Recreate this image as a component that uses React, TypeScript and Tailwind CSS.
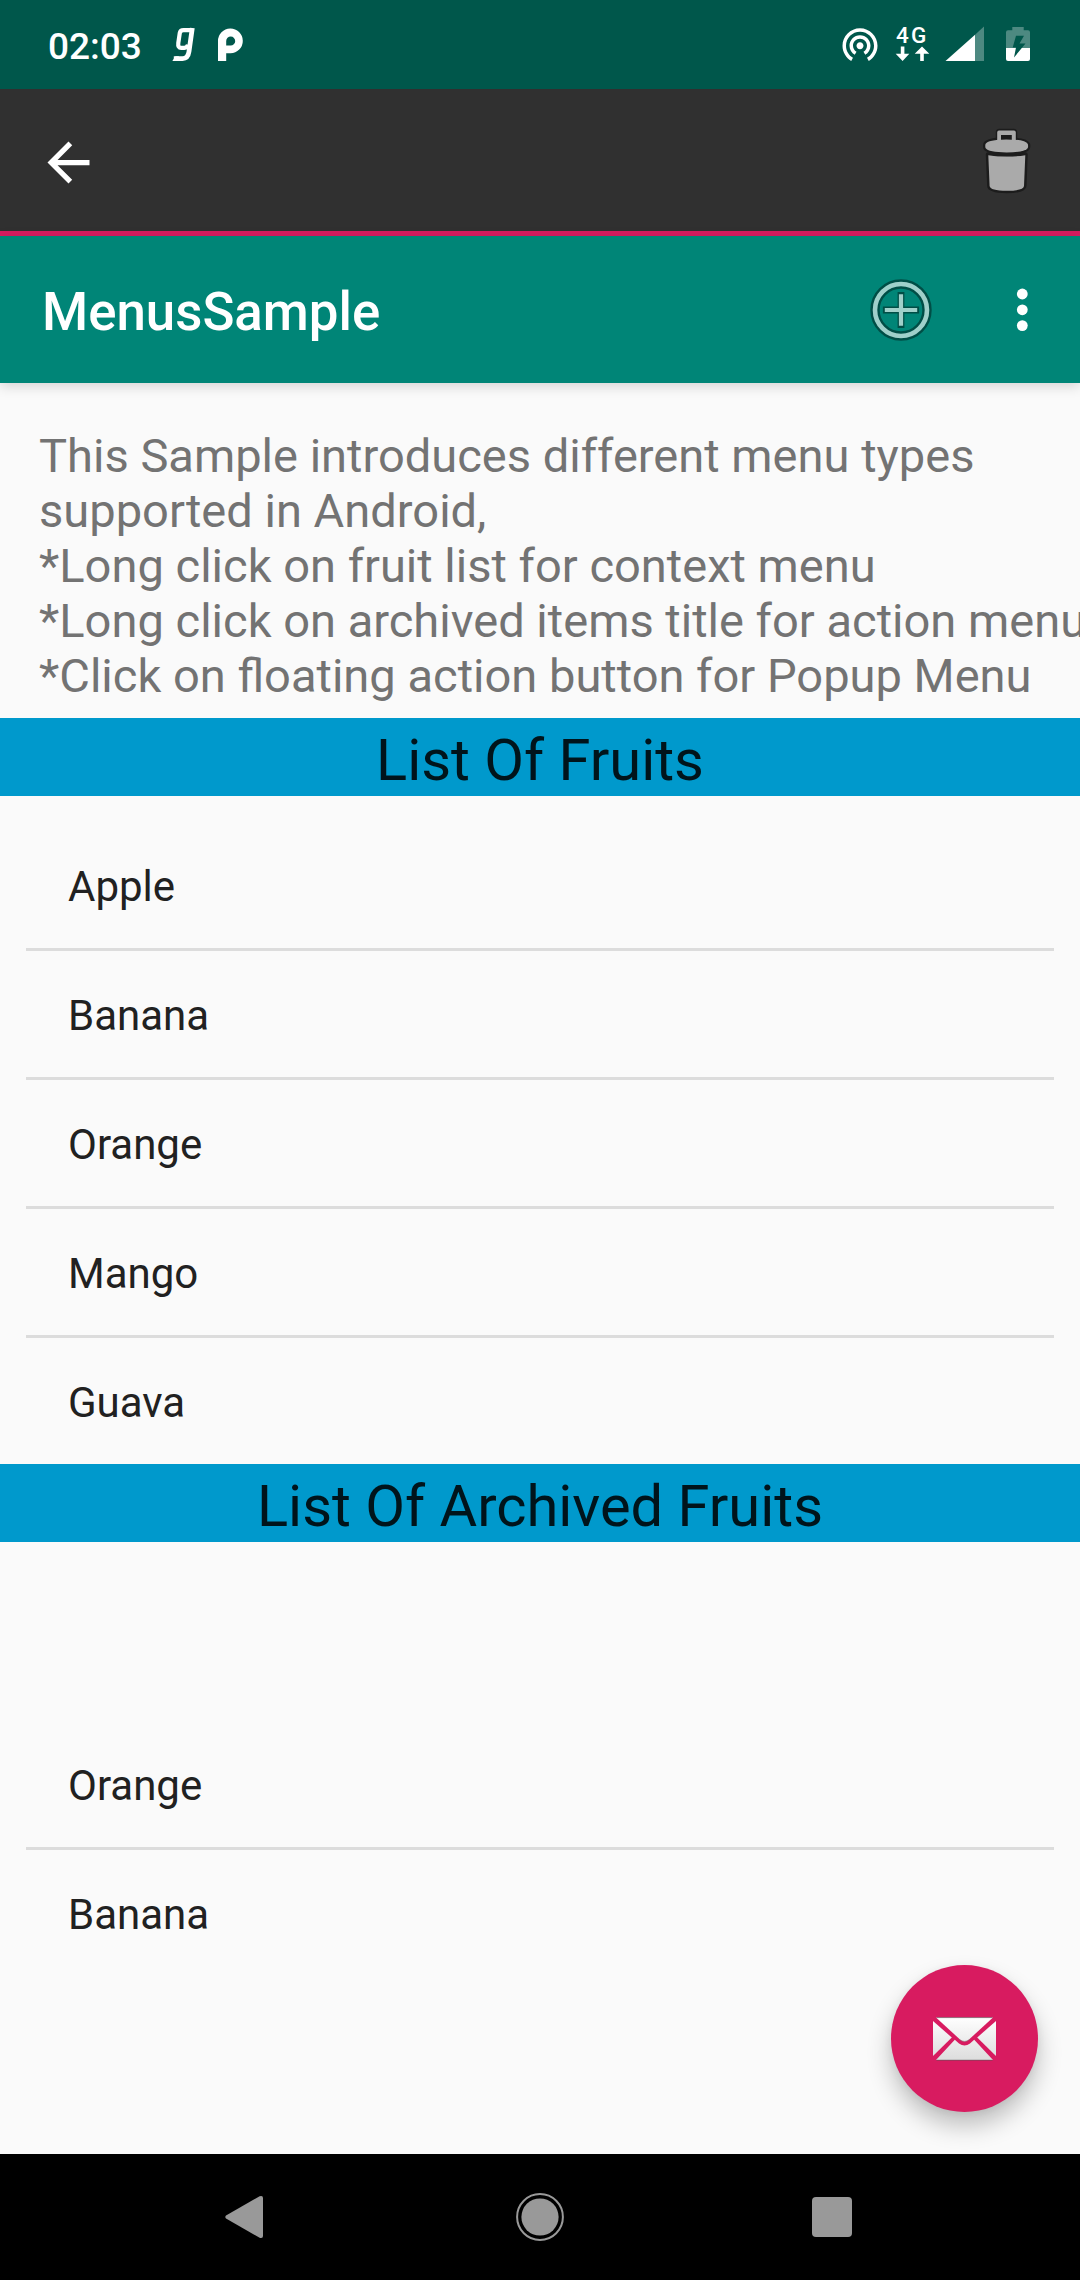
import type { ReactNode } from 'react';

const fruits = ['Apple', 'Banana', 'Orange', 'Mango', 'Guava'];
const archived = ['Orange', 'Banana'];

function StatusBar() {
  return (
    <div className="flex h-[89px] shrink-0 items-start bg-[#00574b] text-white">
      <span className="ml-[48px] mt-[25px] w-[124px] text-[37px] font-medium leading-[43px]">02:03</span>
      <svg className="mt-[27px] h-[35px] w-[24px]" viewBox="0 0 24 35" fill="none" stroke="white">
        <path d="M20.2 3.2H11.6Q8.4 3.2 7.8 6L6.3 16Q5.7 20.8 9.2 20.8H12.4Q15.4 20.8 16 17.6" strokeWidth="4.2" />
        <path d="M20.3 1L17 24.5Q16 31.6 10.5 31.6H1.8" strokeWidth="4.8" />
        <path d="M0.3 34H5L7 29.2H3.5Z" fill="white" stroke="none" />
      </svg>
      <svg className="ml-[21px] mt-[28px] h-[34px] w-[27px]" viewBox="0 0 27 34">
        <path
          fill="white"
          fillRule="evenodd"
          d="M1 33V13A12.4 12.4 0 1 1 13.5 25.2H9.2V33ZM9.2 17.5H13.5A4.5 4.5 0 1 0 9.2 13Z"
        />
      </svg>
      <svg className="ml-[594.5px] mt-[22.7px] size-[42px]" viewBox="0 0 24 24" fill="white">
        <path d="M12 11c-1.1 0-2 .9-2 2s.9 2 2 2 2-.9 2-2-.9-2-2-2zm6 2c0-3.31-2.69-6-6-6s-6 2.69-6 6c0 2.22 1.21 4.15 3 5.19l1-1.74c-1.19-.7-2-1.97-2-3.45 0-2.21 1.79-4 4-4s4 1.79 4 4c0 1.48-.81 2.75-2 3.45l1 1.74c1.79-1.04 3-2.97 3-5.19zM12 3C6.48 3 2 7.48 2 13c0 3.7 2.01 6.92 4.99 8.65l1-1.73C5.61 18.53 4 15.96 4 13c0-4.42 3.58-8 8-8s8 3.58 8 8c0 2.96-1.61 5.53-4 6.92l1 1.73c2.99-1.73 5-4.95 5-8.65 0-5.52-4.48-10-10-10z" />
      </svg>
      <div className="ml-[14.5px] mt-[24px] flex w-[36px] flex-col">
        <span className="pl-[1px] text-[22.5px] font-medium leading-[22px] tracking-[2.2px]">4G</span>
        <svg className="h-[16px] w-[36px]" viewBox="0 0 36 16" fill="white">
          <path d="M5.8 .5h3.6V7.7H14.3L7.6 15 .7 7.7H5.8Z" />
          <path d="M25.2 15V7.7H19.7L27 .5 34.3 7.7H28.8V15Z" />
        </svg>
      </div>
      <svg className="ml-[14px] mt-[26px] h-[35px] w-[39px]" viewBox="0 0 39 35" fill="white">
        <path d="M.5 35L30 8.8V35Z" />
        <path d="M30 8.8L39 .5V35H30Z" opacity=".3" />
      </svg>
      <svg className="ml-[22px] mt-[27px] h-[34px] w-[24px]" viewBox="0 0 24 34">
        <path d="M6.3 0H17.7V3.3H22Q24 3.3 24 5.3V21H0V5.3Q0 3.3 2 3.3H6.3Z" fill="white" opacity=".3" />
        <path d="M0 21H24V32Q24 34 22 34H2Q0 34 0 32Z" fill="white" />
        <path d="M10 8.7H18L13.5 16.5H19.5L8 30.5 10 20.5H6.7Z" fill="#00574b" />
      </svg>
    </div>
  );
}

function ActionModeBar() {
  return (
    <div className="flex h-[147px] shrink-0 justify-between border-b-[5px] border-[#d81b60] bg-[#303030]">
      <svg className="ml-[37.3px] mt-[42px] size-[63px]" viewBox="0 0 24 24" fill="white">
        <path d="M20 11H7.83l5.59-5.59L12 4l-8 8 8 8 1.41-1.41L7.83 13H20z" />
      </svg>
      <svg className="mr-[48px] mt-[37px] h-[70px] w-[50px]" viewBox="0 0 50 70" fill="#aaaaaa">
        <g stroke="#1c1c1c" strokeWidth="4.5" strokeLinejoin="round">
          <path d="M16 16V6.5Q16 5 17.5 5H31.5Q33 5 33 6.5V16Z" />
          <path d="M6 28.5H43.5L42.3 60Q42 65 24.8 65T7.4 60Z" />
          <path d="M3.5 18Q6 13.5 24.7 13.5T45.8 18Q46.4 20 45.8 22Q43 26.4 24.7 26.4T3.5 22Q3 20 3.5 18Z" />
        </g>
        <path d="M6.3 29.2Q24.8 32.2 43.3 29.2L42 60Q41.5 64.8 24.8 64.8T7.6 60Z" />
        <path d="M3.5 18Q6 13.5 24.7 13.5T45.8 18Q46.4 20 45.8 22Q43 26.4 24.7 26.4T3.5 22Q3 20 3.5 18Z" />
        <path d="M15.2 16V6.5Q15.2 4.6 17 4.6H32Q33.8 4.6 33.8 6.5V16Z" />
        <path d="M19 9H29.8V13.8Q24 13.3 19 13.8Z" fill="#1c1c1c" />
      </svg>
    </div>
  );
}

function Toolbar() {
  return (
    <div className="z-10 flex h-[147px] shrink-0 items-center bg-[#008577] shadow-[0_3px_12px_rgba(0,0,0,0.16)]">
      <h1 className="ml-[42px] mt-[4px] flex-1 text-[52.8px] font-medium leading-[62px] text-white">MenusSample</h1>
      <svg className="size-[64px]" viewBox="-32 -32 64 64" fill="none">
        <g stroke="#00453e" opacity=".85">
          <circle r="26" strokeWidth="9.4" />
          <path d="M0-16V16M-16 0H16" strokeWidth="7.4" strokeLinecap="square" transform="scale(.92)" />
        </g>
        <g stroke="#9fd0ca">
          <circle r="26" strokeWidth="4.6" />
          <path d="M0-15.8V15.8M-16.2 0H16.2" strokeWidth="4.2" />
        </g>
      </svg>
      <svg className="ml-[83px] mr-[52px] h-[44px] w-[12px]" viewBox="0 0 12 44" fill="white">
        <circle cx="6.3" cy="6" r="5.4" />
        <circle cx="6.3" cy="21.8" r="5.4" />
        <circle cx="6.3" cy="37.6" r="5.4" />
      </svg>
    </div>
  );
}

function SectionTitle({ children }: { children: ReactNode }) {
  return (
    <h2 className="h-[78px] shrink-0 bg-[#0099cc] pt-[8px] text-center text-[57.8px] leading-[68px] text-black/87">
      {children}
    </h2>
  );
}

function List({ items }: { items: string[] }) {
  return (
    <ul className="mx-[26px] divide-y-[3px] divide-[#dcdcdc]">
      {items.map((item) => (
        <li key={item} className="box-content flex h-[126px] items-center pl-[42px] text-[42px] leading-[50px] text-[#212121]">
          <span className="pt-[4px]">{item}</span>
        </li>
      ))}
    </ul>
  );
}

function NavigationBar() {
  return (
    <div className="flex h-[126px] shrink-0 items-center bg-black">
      <svg className="ml-[225px] h-[44px] w-[40px]" viewBox="0 0 40 44" fill="#999999">
        <path d="M1 20.4L34.6 1.3Q38 .2 38 3V41Q38 43.8 34.6 42.7L1 23.6Q-.4 22 1 20.4Z" />
      </svg>
      <svg className="ml-[251px] size-[48px]" viewBox="-24 -24 48 48" fill="none">
        <circle r="22.9" stroke="#999999" strokeWidth="2" />
        <circle r="18.6" fill="#999999" />
      </svg>
      <div className="ml-[248px] size-[40px] rounded-[4px] bg-[#999999]" />
    </div>
  );
}

function MailButton() {
  return (
    <button
      aria-label="Mail"
      className="absolute right-[42px] bottom-[42px] flex size-[147px] items-center justify-center rounded-full bg-[#d81b60] shadow-[0_14px_24px_rgba(0,0,0,0.24),0_2px_8px_rgba(0,0,0,0.06)]"
    >
      <svg className="h-[44px] w-[63px]" viewBox="0 0 63 44">
        <defs>
          <linearGradient id="paper" x1="0" y1="0" x2="0" y2="44" gradientUnits="userSpaceOnUse">
            <stop offset="0" stopColor="#ffffff" />
            <stop offset="1" stopColor="#dcdcdc" />
          </linearGradient>
        </defs>
        <g fill="url(#paper)">
          <path d="M3 .6H60L36 22.5Q31.5 26.5 27 22.5Z" />
          <path d="M0 4L18.8 20.5 0 39Z" />
          <path d="M63 4L44.2 20.5 63 39Z" />
          <path d="M3 43L21.8 22.8 26 26.4Q31.5 30.4 37 26.4L41.2 22.8 60 43Z" />
        </g>
        <path d="M3.5 .6H59.5M3.5 43.2H59.5" stroke="#555555" strokeWidth="1" opacity=".6" />
        <path d="M26 22.2Q31.5 26.6 37 22.2" fill="none" stroke="#777777" strokeWidth=".9" opacity=".6" />
      </svg>
    </button>
  );
}

export default function App() {
  return (
    <div className="flex h-[2280px] w-[1080px] flex-col overflow-hidden bg-[#fafafa] font-['Roboto',sans-serif]">
      <StatusBar />
      <ActionModeBar />
      <Toolbar />
      <main className="relative flex min-h-0 flex-1 flex-col overflow-hidden">
        <p className="h-[335px] shrink-0 whitespace-pre pt-[45px] pl-[39px] text-[47.05px] leading-[55px] text-[#737373]">
          {[
            'This Sample introduces different menu types',
            'supported in Android,',
            '*Long click on fruit list for context menu',
            '*Long click on archived items title for action menu',
            '*Click on floating action button for Popup Menu',
          ].join('\n')}
        </p>
        <SectionTitle>List Of Fruits</SectionTitle>
        <div className="pt-[26px]">
          <List items={fruits} />
        </div>
        <SectionTitle>List Of Archived Fruits</SectionTitle>
        <div className="pt-[179px]">
          <List items={archived} />
        </div>
        <MailButton />
      </main>
      <NavigationBar />
    </div>
  );
}
